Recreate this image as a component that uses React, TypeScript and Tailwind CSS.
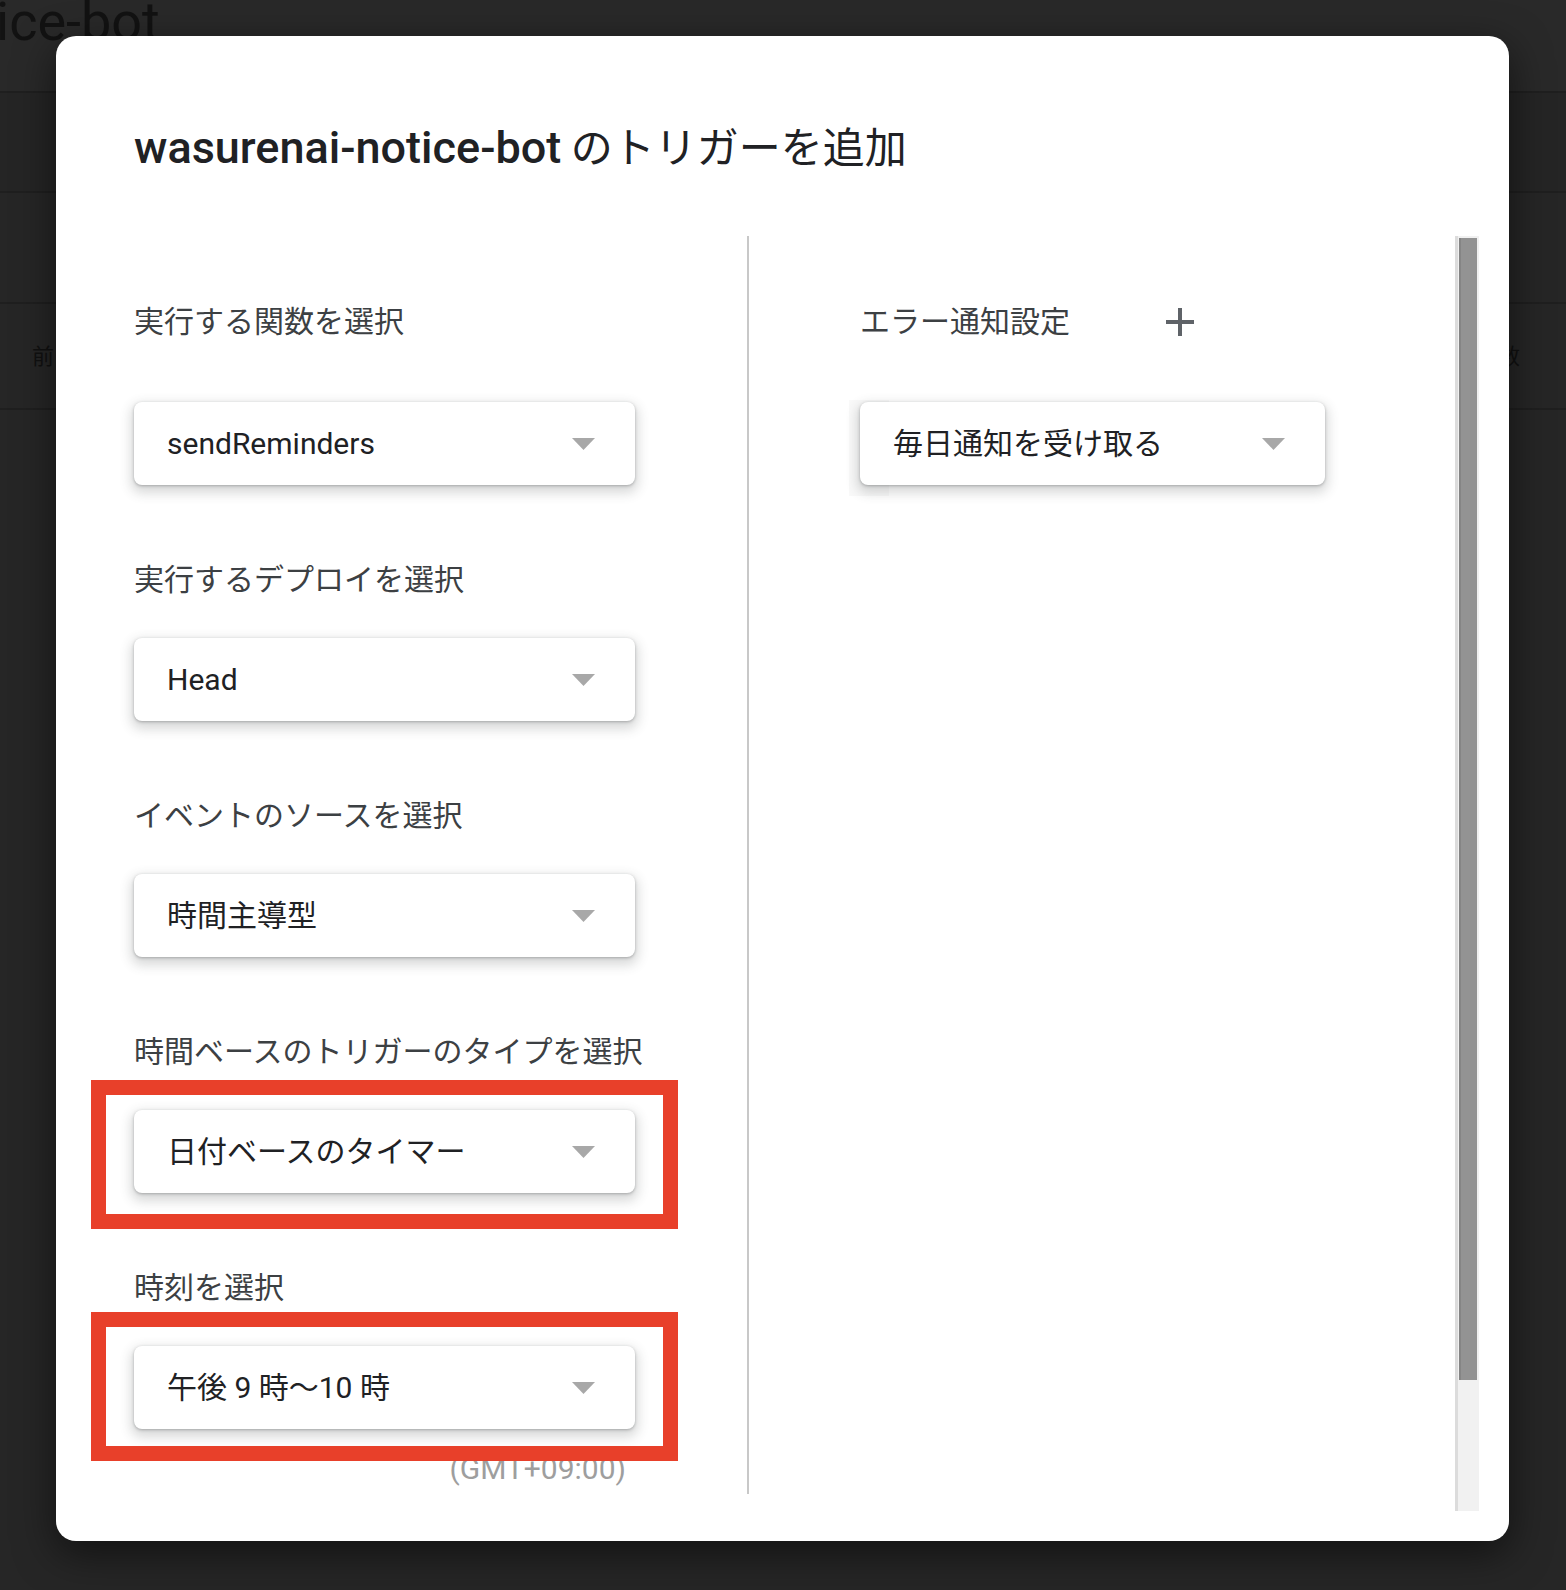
import React from "react";

const JP = "font-['Roboto','Noto_Sans_CJK_JP',sans-serif]";

function Arrow() {
  return (
    <svg width="23" height="12" viewBox="0 0 23 12" className="shrink-0">
      <path d="M0 0H23L11.5 12Z" fill="#a8a8a8" />
    </svg>
  );
}

function Select({ value, width }: { value: string; width: string }) {
  return (
    <div
      className={`relative flex h-[83px] items-center justify-between rounded-[8px] bg-white pl-[33px] pr-[40px] shadow-[0_1px_3px_rgba(60,64,67,0.35),0_5px_12px_3px_rgba(60,64,67,0.2)] ${width}`}
    >
      <span className={`${JP} text-[30px] leading-[40px] text-[#202124]`}>{value}</span>
      <Arrow />
    </div>
  );
}

function Label({ children, className = "" }: { children: React.ReactNode; className?: string }) {
  return (
    <div className={`${JP} text-[30px] leading-[40px] text-[#3c4043] ${className}`}>{children}</div>
  );
}

export default function App() {
  return (
    <div className="relative h-[1590px] w-[1566px] overflow-hidden bg-[#262626]">
      {/* dimmed underlying page */}
      <div className="absolute inset-0">
        <div className="h-[93px] border-b-2 border-[#1f1f1f] bg-[#292929]">
          <div className="relative -left-[4px] top-[-10px] font-['Roboto',sans-serif] text-[54px] leading-[64px] text-[#121212]">
            ice-bot
          </div>
        </div>
        <div className="h-[100px] border-b-2 border-[#1f1f1f] bg-[#252525]" />
        <div className="h-[111px] border-b-2 border-[#1f1f1f] bg-[#262626]" />
        <div className="flex h-[106px] items-center justify-between border-b-2 border-[#1f1f1f] bg-[#262626] px-[32px]">
          <span className={`${JP} text-[22px] text-[#111111]`}>前</span>
          <span className={`${JP} mr-[14px] text-[22px] text-[#111111]`}>数</span>
        </div>
      </div>

      {/* dialog */}
      <div className="absolute left-[56px] top-[36px] flex h-[1505px] w-[1453px] flex-col rounded-[20px] bg-white shadow-[0_12px_40px_rgba(0,0,0,0.55)]">
        <div className="h-[200px] pl-[78px] pt-[81px]">
          <h1 className="text-[42px] leading-[56px] text-[#202124]">
            <span className="font-['Roboto',sans-serif] text-[45px] font-medium">wasurenai-notice-bot</span>
            <span className="font-['Noto_Sans_CJK_JP',sans-serif] text-[42px]"> のトリガーを追加</span>
          </h1>
        </div>

        <div className="flex h-[1275px] pr-[30px]">
          {/* left column */}
          <div className="flex w-[691px] flex-col pl-[78px] pt-[66px]">
            <Label className="mb-[60px]">実行する関数を選択</Label>
            <Select value="sendReminders" width="w-[501px]" />

            <Label className="mb-[38px] mt-[75px]">実行するデプロイを選択</Label>
            <Select value="Head" width="w-[501px]" />

            <Label className="mb-[38px] mt-[75px]">イベントのソースを選択</Label>
            <Select value="時間主導型" width="w-[501px]" />

            <Label className="mb-[38px] mt-[75px]">時間ベースのトリガーのタイプを選択</Label>
            <div className="relative w-[501px]">
              <Select value="日付ベースのタイマー" width="w-[501px]" />
              <div className="pointer-events-none absolute -bottom-[36px] -left-[43px] -right-[43px] -top-[30px] z-10 border-[15px] border-[#e8402a]" />
            </div>

            <Label className="mb-[38px] mt-[75px]">時刻を選択</Label>
            <div className="relative w-[501px]">
              <Select value="午後 9 時〜10 時" width="w-[501px]" />
              <div className="pointer-events-none absolute -bottom-[32px] -left-[43px] -right-[43px] -top-[34px] z-10 border-[15px] border-[#e8402a]" />
            </div>
            <div className="mt-[20px] w-[501px] pr-[9px] text-right font-['Roboto',sans-serif] text-[30px] leading-[40px] text-[#9e9e9e]">
              (GMT+09:00)
            </div>
          </div>

          {/* divider */}
          <div className="h-[1258px] w-[2px] bg-[#c8c8c8]" />

          {/* right column */}
          <div className="flex flex-1 flex-col pl-[111px] pt-[66px]">
            <div className="mb-[60px] flex h-[40px] items-center">
              <Label>エラー通知設定</Label>
              <svg width="28" height="28" viewBox="0 0 28 28" className="ml-[96px]">
                <rect x="12" y="0" width="4" height="28" fill="#5f6368" />
                <rect x="0" y="12" width="28" height="4" fill="#5f6368" />
              </svg>
            </div>
            <div className="relative w-[465px]">
              <div className="absolute -left-[11px] -top-[2px] h-[96px] w-[40px] bg-[#f9f9f9]" />
              <Select value="毎日通知を受け取る" width="w-[465px]" />
            </div>
          </div>

          {/* scrollbar */}
          <div className="flex h-[1275px] w-[24px] border-l-[3px] border-[#dcdcdc] bg-[#f1f1f1] pl-[1px] pr-[2px] pt-[2px]">
            <div className="h-[1142px] w-full border-l-2 border-[#858585] bg-[#939393]" />
          </div>
        </div>
      </div>
    </div>
  );
}
